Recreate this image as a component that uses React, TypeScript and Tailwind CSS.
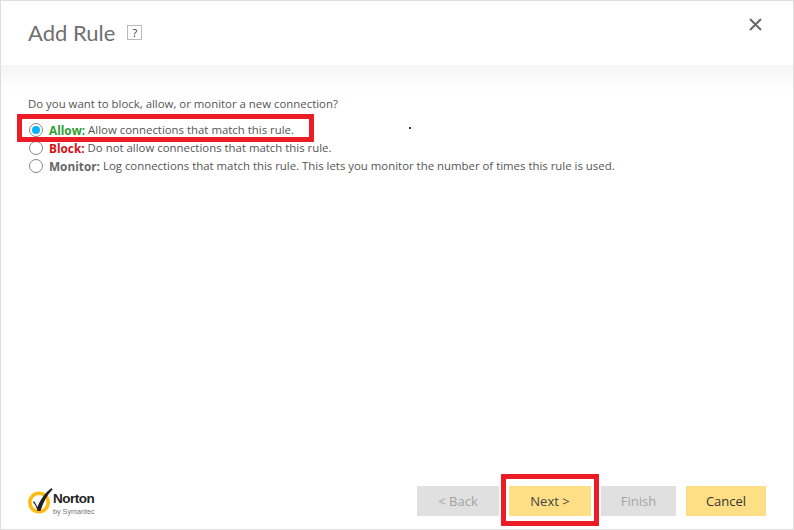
const rules = [
  { id: "allow", label: "Allow:", color: "text-[#2e9e36]", text: "Allow connections that match this rule.", checked: true },
  { id: "block", label: "Block:", color: "text-[#d40f0f]", text: "Do not allow connections that match this rule.", checked: false },
  { id: "monitor", label: "Monitor:", color: "text-[#666666]", text: "Log connections that match this rule. This lets you monitor the number of times this rule is used.", checked: false },
]

const NortonLogo = () => (
  <div className="flex items-start">
    <svg width="26" height="27" viewBox="0 0 26 27">
      <circle cx="12" cy="14.5" r="9.2" fill="none" stroke="#fdbb14" strokeWidth="3.6" />
      <path d="M7 13 L10.5 19 C13 12 18 5 24.5 0 L25.5 1.5 C20 7 16 15 13.5 23 L10.5 23 C9.5 19 8 16 6 14.5 Z" fill="#222222" />
    </svg>
    <div className="flex flex-col pt-[4px] [font-family:'Liberation_Sans',sans-serif]">
      <span className="text-[13.5px] leading-[14px] font-bold tracking-[-0.5px] text-[#222222]">Norton</span>
      <span className="text-[7.2px] leading-[9px] mt-[1px] text-[#777777]">by Symantec</span>
    </div>
  </div>
)

const App = () => {
  return (
    <div className="relative w-[794px] h-[530px] flex flex-col bg-white border border-[#dddddd] [font-family:'Open_Sans',sans-serif] overflow-hidden">
      <header className="h-[64px] flex items-start justify-between pl-[27px] pr-[31px]">
        <div className="flex items-start gap-[12px] pt-[16px]">
          <h1 className="text-[22px] leading-[32px] text-[#6f6f6f] [font-family:Lato,sans-serif]">Add Rule</h1>
          <span className="w-[15px] h-[15px] mt-[8px] flex items-center justify-center border border-[#bbbbbb] text-[11px] leading-none text-[#333333]">?</span>
        </div>
        <svg className="mt-[17px]" width="13" height="13" viewBox="0 0 13 13">
          <path d="M1 1 L12 12 M12 1 L1 12" stroke="#666666" strokeWidth="2" fill="none" />
        </svg>
      </header>

      <main className="flex-1 flex flex-col bg-gradient-to-b from-[#f5f5f5] to-white to-[26px] pl-[27px] pt-[30px]">
        <p className="text-[11.4px] leading-[18px] text-[#555555]">Do you want to block, allow, or monitor a new connection?</p>
        <div className="mt-[8px] flex flex-col">
          {rules.map((rule) => (
            <label key={rule.id} className="flex items-center h-[18px] text-[11.4px] leading-[18px] text-[#555555]">
              {rule.checked ? (
                <span className="w-[14px] h-[14px] ml-[1px] mr-[6px] rounded-full border border-[#888888] flex items-center justify-center">
                  <span className="w-[8px] h-[8px] rounded-full bg-[#00b4ff]"></span>
                </span>
              ) : (
                <span className="w-[14px] h-[14px] ml-[1px] mr-[6px] rounded-full border border-[#888888] bg-white"></span>
              )}
              <span className={`text-[11.8px] font-bold mr-[3px] ${rule.color}`}>{rule.label}</span>
              <span>{rule.text}</span>
            </label>
          ))}
        </div>
      </main>

      <footer className="h-[60px] flex items-start justify-between pl-[26px] pr-[27px]">
        <div className="mt-[19px]">
          <NortonLogo />
        </div>
        <div className="flex gap-[10px] pt-[17px] text-[13px]">
          <button className="w-[82px] h-[30px] pt-[2px] bg-[#e0e0e0] text-[#a3a3a3]">&lt; Back</button>
          <button className="w-[82px] h-[30px] pt-[2px] bg-[#ffdf85] text-[#444444]">Next &gt;</button>
          <button className="w-[75px] h-[30px] pt-[2px] bg-[#e0e0e0] text-[#a3a3a3]">Finish</button>
          <button className="w-[80px] h-[30px] pt-[2px] bg-[#ffdf85] text-[#333333]">Cancel</button>
        </div>
      </footer>

      {/* red annotations from the screenshot */}
      <div className="absolute left-[16px] top-[113px] w-[297px] h-[28px] border-[5px] border-[#ed1c24]"></div>
      <div className="absolute left-[500px] top-[473px] w-[98px] h-[52px] border-[5px] border-[#ed1c24]"></div>
      <div className="absolute left-[408px] top-[126px] w-[2px] h-[2px] bg-[#333333]"></div>
    </div>
  )
}

export default App
